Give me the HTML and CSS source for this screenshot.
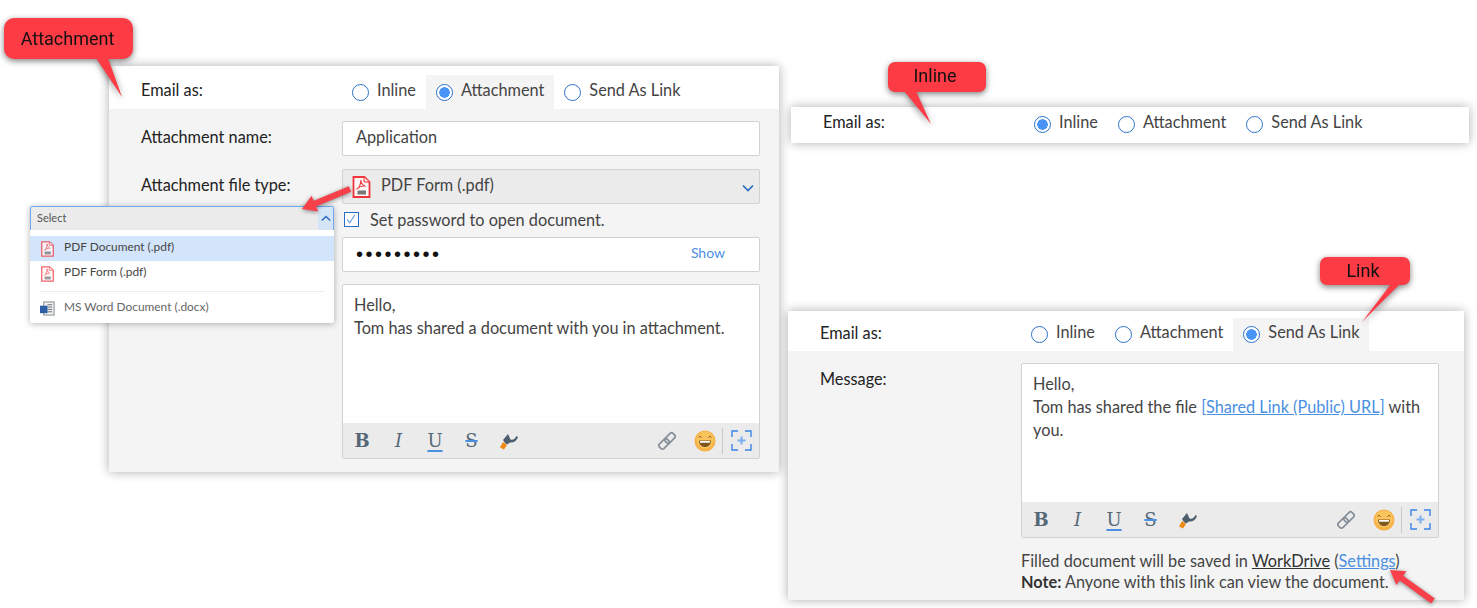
FILE: index.html
```html
<!DOCTYPE html>
<html lang="en">
<head>
<meta charset="utf-8">
<title>Email as options</title>
<link rel="stylesheet" href="styles.css">
</head>
<body>
<svg class="sprite" aria-hidden="true">
  <symbol id="i-pdf" viewBox="0 0 18 22">
    <path d="M1 1h11l5 5v15H1z" fill="#fff6f6" stroke="#f2353c" stroke-width="1.800"/>
    <path d="M11.500 1v5h5" fill="#fde3e3" stroke="#f2353c" stroke-width="1"/>
    <path d="M8.500 4c-.5 2 .8 4 3.500 6-2.500-.2-5 .5-7 2.500 1.800-.5 2.800-3 3.500-8.500" fill="none" stroke="#f2353c" stroke-width="1.100"/>
    <rect x="5" y="14.500" width="8.500" height="4" fill="#777"/>
  </symbol>
  <symbol id="i-word" viewBox="0 0 16 16">
    <rect x="4" y="1" width="11" height="14" fill="#f2f2f2" stroke="#7d858c"/>
    <path d="M8 4h5M8 6.500h5M8 9h5M8 11.500h5" stroke="#5f676e"/>
    <rect x="0" y="5" width="8" height="8" fill="#2c5fa8"/>
  </symbol>
  <symbol id="i-brush" viewBox="0 0 20 20">
    <path d="M6 12 4 9 9 3l2.500 5.500C14 9.500 16 8 17.500 5l1.500 1c-1.500 4-4.500 6-8 5.500L8 13.500z" fill="#4d5f6e"/>
    <path d="M1 16.500 4 11l4 3-3 4.500z" fill="#ee8a12"/>
  </symbol>
  <symbol id="i-link" viewBox="0 0 24 24">
    <g fill="none" stroke="#858f98" stroke-width="1.800" transform="rotate(-45 12 12)">
      <rect x="1.500" y="8.500" width="12" height="7" rx="2.500"/>
      <rect x="10.500" y="8.500" width="12" height="7" rx="2.500"/>
    </g>
  </symbol>
  <symbol id="i-emoji" viewBox="0 0 22 22">
    <circle cx="11" cy="11" r="10.500" fill="#f6b248"/>
    <circle cx="11" cy="10" r="8.500" fill="#fac45c"/>
    <path d="M4.500 7.500c.8-1.300 2.400-1.300 3.200 0M14.300 7.500c.8-1.300 2.400-1.300 3.200 0" fill="none" stroke="#7a5522" stroke-width="1"/>
    <path d="M5 10.500h12c0 4-2.500 6.500-6 6.500s-6-2.500-6-6.500z" fill="#80561f"/>
    <path d="M6 11h10c0 .8-.1 1.300-.3 1.800H6.300C6.100 12.300 6 11.800 6 11z" fill="#fff"/>
  </symbol>
  <symbol id="i-insert" viewBox="0 0 21 21">
    <path d="M1 7V1h6M14 1h6v6M20 14v6h-6M7 20H1v-6" fill="none" stroke="#3a86e6" stroke-width="1.400"/>
    <path d="M10.500 6.500v8M6.500 10.500h8" stroke="#7aaef0" stroke-width="2"/>
  </symbol>
  <symbol id="i-down" viewBox="0 0 12 8">
    <path d="M1 1.500l5 5 5-5" fill="none" stroke="#2b6cc4" stroke-width="1.700"/>
  </symbol>
</svg>

<main class="canvas">

  <section class="panel panel-attachment">
    <div class="email-row email-row-tall">
      <span class="label">Email as:</span>
      <div class="radios">
        <label class="radio-item"><span class="radio"></span>Inline</label>
        <label class="radio-item active"><span class="radio on"></span>Attachment</label>
        <label class="radio-item"><span class="radio"></span>Send As Link</label>
      </div>
    </div>
    <div class="panel-body">
      <div class="form-row row-gap">
        <span class="label">Attachment name:</span>
        <div class="input">Application</div>
      </div>
      <div class="form-row">
        <span class="label">Attachment file type:</span>
        <div class="input select">
          <svg class="ic-pdf"><use href="#i-pdf"/></svg>
          <span class="select-text">PDF Form (.pdf)</span>
          <svg class="ic-down"><use href="#i-down"/></svg>
        </div>
      </div>
      <div class="indent">
        <label class="check-row"><span class="checkbox"><svg viewBox="0 0 14 14" class="check"><path d="M2.500 7.500l3 4 6-9.500" fill="none" stroke="#5a9bec" stroke-width="1.200"/></svg></span>Set password to open document.</label>
        <div class="input password"><span class="dots">•••••••••</span><span class="show">Show</span></div>
        <div class="editor">
          <div class="editor-text">Hello,<br>Tom has shared a document with you in attachment.</div>
          <div class="toolbar">
            <span class="tool t-b">B</span><span class="tool t-i">I</span><span class="tool t-u">U</span><span class="tool t-s">S</span>
            <span class="tool"><svg class="ic-brush"><use href="#i-brush"/></svg></span>
            <div class="tools-right">
              <svg class="ic-link"><use href="#i-link"/></svg>
              <svg class="ic-emoji"><use href="#i-emoji"/></svg>
              <span class="tool-sep"></span>
              <svg class="ic-insert"><use href="#i-insert"/></svg>
            </div>
          </div>
        </div>
      </div>
    </div>
  </section>

  <section class="dropdown">
    <div class="dropdown-head"><span>Select</span><span class="dropdown-chev"><svg class="ic-up"><use href="#i-down"/></svg></span></div>
    <ul class="dropdown-list">
      <li class="dropdown-item selected"><svg class="ic-pdf-sm"><use href="#i-pdf"/></svg>PDF Document (.pdf)</li>
      <li class="dropdown-item"><svg class="ic-pdf-sm"><use href="#i-pdf"/></svg>PDF Form (.pdf)</li>
      <li class="dropdown-sep"></li>
      <li class="dropdown-item muted"><svg class="ic-word"><use href="#i-word"/></svg>MS Word Document (.docx)</li>
    </ul>
  </section>

  <section class="panel panel-inline">
    <div class="email-row email-row-short">
      <span class="label">Email as:</span>
      <div class="radios">
        <label class="radio-item"><span class="radio on"></span>Inline</label>
        <label class="radio-item"><span class="radio"></span>Attachment</label>
        <label class="radio-item"><span class="radio"></span>Send As Link</label>
      </div>
    </div>
  </section>

  <section class="panel panel-link">
    <div class="email-row email-row-mid">
      <span class="label">Email as:</span>
      <div class="radios">
        <label class="radio-item"><span class="radio"></span>Inline</label>
        <label class="radio-item"><span class="radio"></span>Attachment</label>
        <label class="radio-item active"><span class="radio on"></span>Send As Link</label>
      </div>
    </div>
    <div class="panel-body">
      <div class="form-row form-row-top">
        <span class="label label-top">Message:</span>
        <div class="editor">
          <div class="editor-text">Hello,<br>Tom has shared the file <a class="link">[Shared Link (Public) URL]</a> with you.</div>
          <div class="toolbar">
            <span class="tool t-b">B</span><span class="tool t-i">I</span><span class="tool t-u">U</span><span class="tool t-s">S</span>
            <span class="tool"><svg class="ic-brush"><use href="#i-brush"/></svg></span>
            <div class="tools-right">
              <svg class="ic-link"><use href="#i-link"/></svg>
              <svg class="ic-emoji"><use href="#i-emoji"/></svg>
              <span class="tool-sep"></span>
              <svg class="ic-insert"><use href="#i-insert"/></svg>
            </div>
          </div>
        </div>
      </div>
      <p class="foot indent">Filled document will be saved in <u class="wd">WorkDrive</u> (<a class="link">Settings</a>)<br><b class="note">Note:</b> Anyone with this link can view the document.</p>
    </div>
  </section>

  <div class="callout callout-attachment">Attachment
    <svg class="tail" width="40" height="42" viewBox="0 0 40 42"><path d="M0 0 L26 39 L12 0z"/></svg>
  </div>
  <div class="callout callout-inline">Inline
    <svg class="tail" width="40" height="36" viewBox="0 0 40 36"><path d="M0 0 L27 33 L12 0z"/></svg>
  </div>
  <div class="callout callout-link">Link
    <svg class="tail" width="50" height="40" viewBox="0 0 50 40"><path d="M29 0 L0 38 L38 0z"/></svg>
  </div>

  <svg class="arrows" viewBox="0 0 1477 608" width="1477" height="608" aria-hidden="true">
    <polygon points="348.800,186.200 313.800,200.800 311.600,195.800 302,209 318.200,211.400 316,206.400 351.200,191.800"/>
    <polygon points="1434.800,598.600 1403.200,575.800 1406.400,571.300 1390,570 1396.400,585.100 1399.600,580.600 1431.200,603.400"/>
  </svg>
</main>
</body>
</html>
```
FILE: styles.css
```css
* { box-sizing: border-box; }
html, body { margin: 0; padding: 0; background: #fff; }
body { font-family: "Lato", "Liberation Sans", sans-serif; font-size: 16.300px; color: #444; }
.sprite { position: absolute; width: 0; height: 0; overflow: hidden; }
.canvas { position: relative; width: 1477px; height: 608px; overflow: hidden; }

.panel { position: absolute; background: #f4f4f4; box-shadow: 0 0 10px rgba(0,0,0,.32); }
.panel-attachment { left: 109px; top: 66px; width: 670px; height: 406px; }
.panel-inline { left: 791px; top: 107px; width: 678px; height: 36px; background: #fff; }
.panel-link { left: 788px; top: 311px; width: 676px; height: 289px; }

.email-row { display: flex; align-items: flex-end; padding-left: 32px; background: #fff; }
.email-row-tall { height: 43px; }
.email-row-mid { height: 40px; }
.email-row-short { height: 36px; align-items: flex-start; }
.label { width: 201px; flex: none; color: #222; line-height: 30px; padding-bottom: 4px; }
.email-row-mid .label { line-height: 29px; }
.email-row-mid .radio-item { height: 33px; }
.radios { display: flex; }
.radio-item { display: flex; align-items: center; gap: 8px; height: 34px; padding: 0 10px 6px 10px; color: #444; white-space: nowrap; }
.radio-item.active { background: #f4f4f4; }
.radio { width: 17px; height: 17px; margin-top: 6px; border-radius: 50%; border: 1.500px solid #2b72c9; background: #fff; flex: none; }
.radio.on { background: radial-gradient(circle, #4a94f5 0 5px, #fff 5.500px); }

.panel-body { padding: 12px 25px 0 32px; }
.panel-attachment .panel-body { padding-right: 19px; }
.form-row { display: flex; align-items: center; }
.form-row-top { align-items: flex-start; }
.label-top { line-height: 32px; padding-bottom: 0; }
.row-gap { margin-bottom: 13px; }
.input { width: 418px; height: 35px; background: #fff; border: 1px solid #d2d2d2; border-radius: 2px; padding: 0 13px 4px; display: flex; align-items: center; color: #444; }
.select { background: #ebebeb; padding: 0 5px 4px 9px; }
.select-text { margin-left: 10px; flex: 1; }
.ic-pdf { width: 19px; height: 22px; flex: none; margin-top: 4px; }
.ic-down { width: 12px; height: 8px; margin-top: 6px; }

.indent { margin-left: 201px; }
.check-row { display: flex; align-items: center; gap: 11px; height: 33px; padding: 0 0 2px 2px; color: #444; }
.checkbox { width: 15px; height: 15px; border: 1.500px solid #2b6cc4; background: #fff; display: flex; }
.check { width: 12px; height: 12px; }
.password { justify-content: space-between; padding: 0 34px 0 13px; margin-bottom: 12px; }
.dots { font-family: "Liberation Sans", sans-serif; font-size: 20px; letter-spacing: 2.500px; color: #111; }
.show { color: #4a90e2; font-size: 14px; margin-bottom: 4px; }

.editor { width: 418px; height: 175px; display: flex; flex-direction: column; background: #fff; border: 1px solid #d2d2d2; border-radius: 2px; }
.editor-text { flex: 1; padding: 8px 11px; line-height: 23px; color: #444; }
.link { color: #4a90e2; text-decoration: underline; }
.toolbar { height: 35px; flex: none; background: #ebebeb; display: flex; align-items: center; padding: 0 7px 0 6px; gap: 10.500px; }
.tool { width: 26px; text-align: center; font-family: "DejaVu Serif", serif; font-size: 18px; line-height: 22px; color: #566876; display: flex; justify-content: center; }
.t-b { font-weight: 700; }
.t-i { font-style: italic; }
.t-u { text-decoration: underline; text-decoration-color: #4a90e2; text-decoration-thickness: 2px; text-underline-offset: 3px; }
.t-s { text-decoration: line-through; text-decoration-color: #4a90e2; text-decoration-thickness: 2px; }
.ic-brush { width: 20px; height: 20px; margin-left: 1px; }
.tools-right { margin-left: auto; display: flex; align-items: center; }
.ic-link { width: 22px; height: 22px; margin-right: 16px; }
.ic-emoji { width: 22px; height: 22px; margin-right: 6px; }
.tool-sep { width: 1px; height: 26px; background: #c8c8c8; margin-right: 8px; }
.ic-insert { width: 21px; height: 21px; }

.foot { margin-top: 12px; margin-bottom: 0; line-height: 21px; color: #444; white-space: nowrap; }
.wd { color: #333; }
.note { color: #333; }

.dropdown { position: absolute; left: 30px; top: 206px; width: 304px; height: 117px; background: #fff; box-shadow: 0 1px 6px rgba(0,0,0,.3); border-radius: 2px; font-size: 11.900px; color: #444; z-index: 2; }
.dropdown-head { height: 24px; display: flex; justify-content: space-between; background: #ebebeb; border: 1px solid #6fa8ee; border-bottom: 0; border-radius: 2px 2px 0 0; padding-left: 6px; font-size: 11px; line-height: 21px; color: #555; }
.dropdown-chev { width: 15px; height: 23px; background: #d5e5f8; display: flex; align-items: center; justify-content: center; }
.ic-up { width: 10px; height: 7px; transform: rotate(180deg); }
.dropdown-list { list-style: none; margin: 6px 0 0; padding: 0; }
.dropdown-item { height: 25px; display: flex; align-items: center; padding: 0 0 5px 11px; gap: 10px; white-space: nowrap; }
.dropdown-item.selected { background: #d3e5fb; }
.dropdown-item.muted { color: #666; }
.dropdown-sep { height: 1px; background: #ececec; margin: 5px 10px 4px 10px; }
.ic-pdf-sm { width: 13px; height: 16px; flex: none; margin-top: 5px; opacity: .75; }
.ic-word { width: 15px; height: 15px; flex: none; margin: 5px -1px 0 -1px; }

.callout { position: absolute; background: #fd3b45; border-radius: 10px; color: #111; font-family: "Roboto", sans-serif; font-size: 18px; display: flex; align-items: center; justify-content: center; filter: drop-shadow(0 2px 3px rgba(0,0,0,.5)); z-index: 3; }
.tail { position: absolute; fill: #fd3b45; }
.callout-attachment { left: 4px; top: 18px; width: 129px; height: 41px; padding-right: 2px; }
.callout-attachment .tail { left: 92px; top: 40px; }
.callout-inline { left: 888px; top: 62px; width: 98px; height: 30px; border-radius: 7px; padding: 0 4px 4px 0; }
.callout-inline .tail { left: 16px; top: 29px; }
.callout-link { left: 1320px; top: 257px; width: 90px; height: 28px; border-radius: 7px; padding: 0 4px 2px 0; }
.callout-link .tail { left: 42px; top: 27px; }

.arrows { position: absolute; left: 0; top: 0; fill: #f7404a; filter: drop-shadow(0 1px 2px rgba(0,0,0,.45)); z-index: 4; }
```
